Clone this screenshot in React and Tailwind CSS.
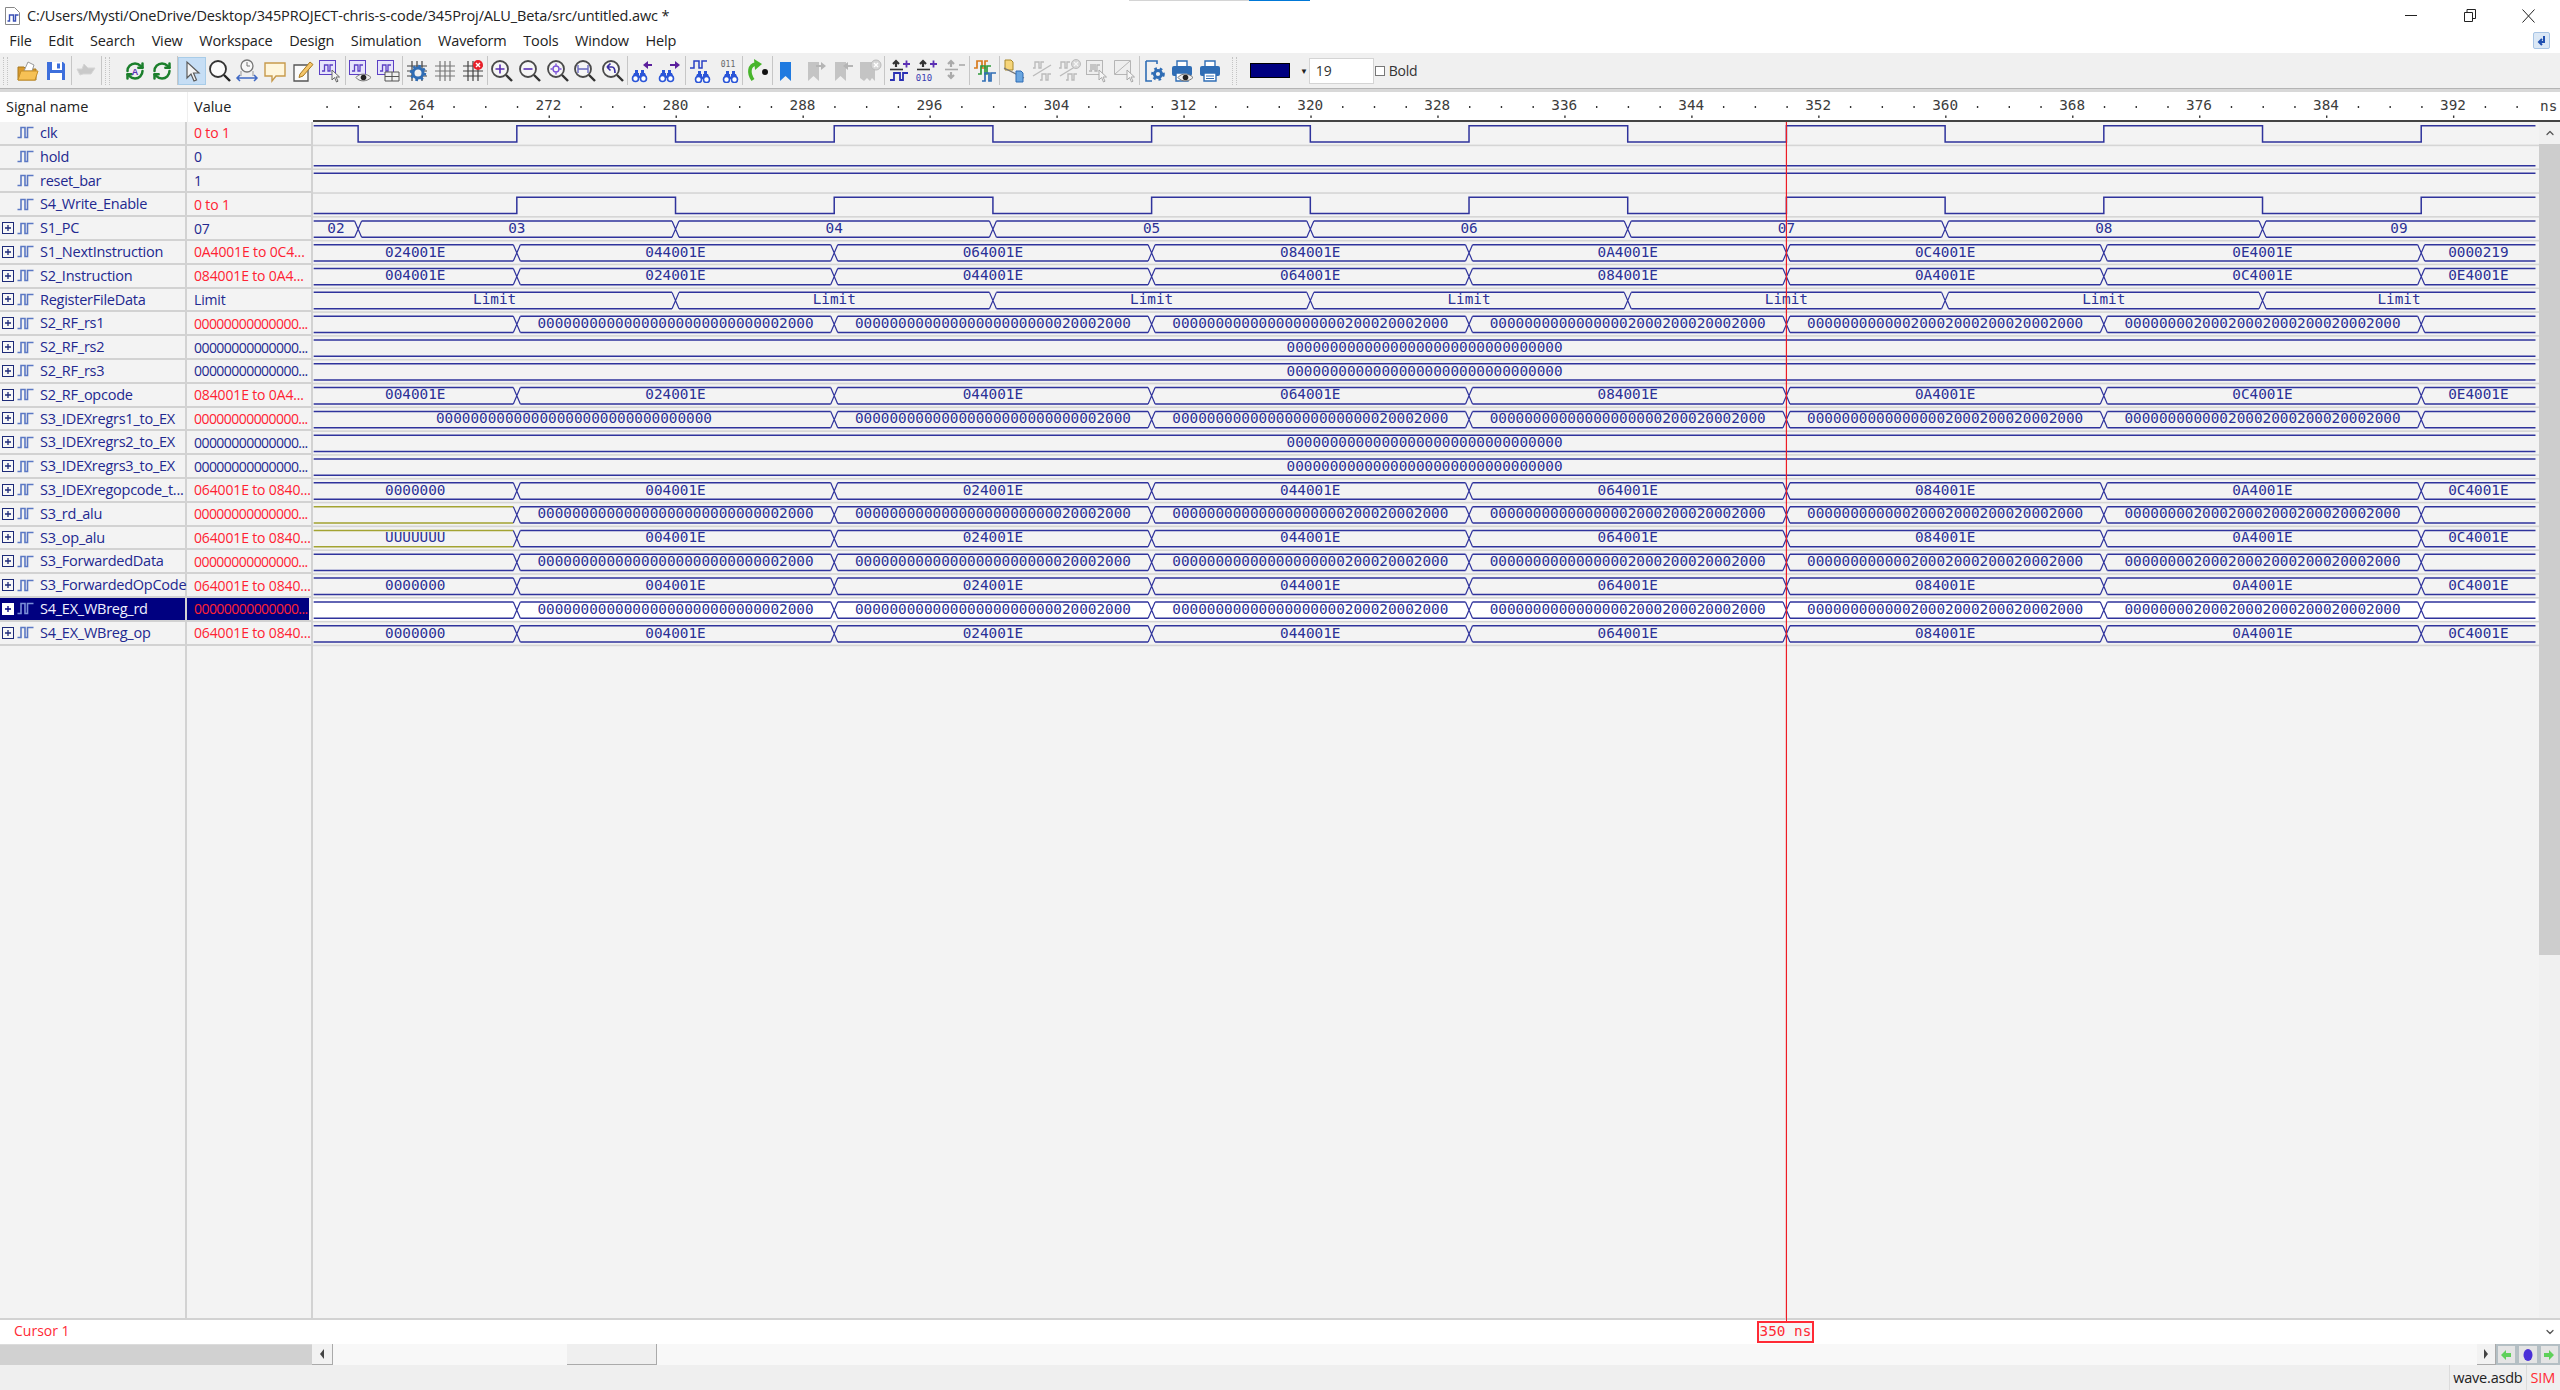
import { RefreshCw, ChevronUp, ChevronDown } from 'lucide-react';

const PX = 15.87;
const X = (t) => 108.6 + (t - 264) * PX;
const T_END = 397.2;
const T_START = 257.2;
const ROW = 23.81;

const steps = (from, to, by) => {
  const out = [];
  for (let t = from; t <= to; t += by) out.push(t);
  return out;
};
const x2000 = (n) => '0'.repeat(32 - 4 * n) + '2000'.repeat(n);
const ZERO = '0'.repeat(32);

const OPS = ['004001E', '024001E', '044001E', '064001E', '084001E', '0A4001E', '0C4001E', '0E4001E'];
const C270 = steps(270, 390, 20);
const DATA = ['', x2000(1), x2000(2), x2000(3), x2000(4), x2000(5), x2000(6), ''];
const OPS3 = ['0000000', ...OPS.slice(0, 7)];
const CLK = steps(260, 390, 10);
const LONG = '00000000000000...';
const OP_VAL = '064001E to 0840...';

const signals = [
  { name: 'clk', value: '0 to 1', red: true, bit: { init: 1, edges: CLK } },
  { name: 'hold', value: '0', bit: { init: 0, edges: [] } },
  { name: 'reset_bar', value: '1', bit: { init: 1, edges: [] } },
  { name: 'S4_Write_Enable', value: '0 to 1', red: true, bit: { init: 0, edges: steps(270, 390, 10) } },
  { name: 'S1_PC', value: '07', open: true, changes: steps(260, 380, 20), labels: ['02', '03', '04', '05', '06', '07', '08', '09'] },
  { name: 'S1_NextInstruction', value: '0A4001E to 0C4...', red: true, open: true, changes: C270, labels: ['024001E', '044001E', '064001E', '084001E', '0A4001E', '0C4001E', '0E4001E', '0000219'] },
  { name: 'S2_Instruction', value: '084001E to 0A4...', red: true, open: true, changes: C270, labels: OPS },
  { name: 'RegisterFileData', value: 'Limit', open: true, changes: steps(280, 380, 20), labels: Array(7).fill('Limit') },
  { name: 'S2_RF_rs1', value: LONG, red: true, open: true, changes: C270, labels: DATA },
  { name: 'S2_RF_rs2', value: LONG, open: true, changes: [], labels: [ZERO] },
  { name: 'S2_RF_rs3', value: LONG, open: true, changes: [], labels: [ZERO] },
  { name: 'S2_RF_opcode', value: '084001E to 0A4...', red: true, open: true, changes: C270, labels: OPS },
  { name: 'S3_IDEXregrs1_to_EX', value: LONG, red: true, open: true, changes: steps(290, 390, 20), labels: [ZERO, x2000(1), x2000(2), x2000(3), x2000(4), x2000(5), ''] },
  { name: 'S3_IDEXregrs2_to_EX', value: LONG, open: true, changes: [], labels: [ZERO] },
  { name: 'S3_IDEXregrs3_to_EX', value: LONG, open: true, changes: [], labels: [ZERO] },
  { name: 'S3_IDEXregopcode_t...', value: OP_VAL, red: true, open: true, changes: C270, labels: OPS3 },
  { name: 'S3_rd_alu', value: LONG, red: true, open: true, changes: C270, labels: DATA, olive: true },
  { name: 'S3_op_alu', value: OP_VAL, red: true, open: true, changes: C270, labels: ['UUUUUUU', ...OPS3.slice(1)], olive: true },
  { name: 'S3_ForwardedData', value: LONG, red: true, open: true, changes: C270, labels: DATA },
  { name: 'S3_ForwardedOpCode', value: OP_VAL, red: true, open: true, changes: C270, labels: OPS3 },
  { name: 'S4_EX_WBreg_rd', value: LONG, red: true, open: true, changes: C270, labels: DATA, selected: true },
  { name: 'S4_EX_WBreg_op', value: OP_VAL, red: true, open: true, changes: C270, labels: OPS3 },
];

const LINE = '#2f339c';
const OLIVE = '#a3a332';

function BitWave({ sig, y }) {
  const hi = y + 3.7;
  const lo = y + 20;
  let level = sig.bit.init;
  let d = `M${X(T_START)} ${level ? hi : lo}`;
  sig.bit.edges.forEach((t) => {
    d += ` H${X(t)} V${level ? lo : hi}`;
    level = level ? 0 : 1;
  });
  d += ` H${X(T_END)}`;
  return <path d={d} fill="none" stroke={LINE} strokeWidth="1.5" />;
}

function BusWave({ sig, y }) {
  const hi = y + 3.7;
  const lo = y + 20;
  const cuts = [T_START, ...sig.changes, T_END];
  return (
    <g>
      {sig.labels.map((label, i) => {
        const a = X(cuts[i]) + (i === 0 ? 0 : 3.5);
        const b = X(cuts[i + 1]) - (i === sig.labels.length - 1 ? 0 : 3.5);
        const color = sig.olive && i === 0 ? OLIVE : LINE;
        return (
          <g key={i}>
            <path d={`M${a} ${hi} H${b} M${a} ${lo} H${b}`} fill="none" stroke={color} strokeWidth="1.5" />
            {label && (
              <text
                x={(X(cuts[i]) + X(cuts[i + 1])) / 2}
                y={y + 15.5}
                textAnchor="middle"
                className="font-['DejaVu_Sans_Mono',monospace] text-[14.33px]"
                fill="#2a3096"
              >
                {label}
              </text>
            )}
          </g>
        );
      })}
      {sig.changes.map((t) => (
        <path
          key={t}
          d={`M${X(t) - 3.5} ${hi} L${X(t) + 3.5} ${lo} M${X(t) - 3.5} ${lo} L${X(t) + 3.5} ${hi}`}
          fill="none"
          stroke={LINE}
          strokeWidth="1.2"
        />
      ))}
    </g>
  );
}

function Waves() {
  return (
    <svg width="2226" height="1196" className="block shrink-0">
      <rect width="2226" height="1196" fill="#f3f3f3" />
      {signals.map((sig, i) => {
        const y = i * ROW;
        return (
          <g key={sig.name}>
            {sig.selected && <rect x="0" y={y + 1} width="2225" height={ROW - 2} fill="#ffffff" />}
            <rect x="0" y={y + 22.6} width="2226" height="1.6" fill="#d5d5d5" />
            {sig.bit ? <BitWave sig={sig} y={y} /> : <BusWave sig={sig} y={y} />}
          </g>
        );
      })}
      <line x1={X(350)} y1="0" x2={X(350)} y2="1196" stroke="#ee1c25" strokeWidth="1.2" />
    </svg>
  );
}

function Ruler() {
  const labels = steps(264, 392, 8);
  const dots = steps(258, 396, 2).filter((t) => (t - 264) % 8 !== 0);
  return (
    <svg width="2247" height="30" className="block shrink-0">
      {dots.map((t) => (
        <rect key={t} x={X(t)} y="14" width="1.4" height="2" fill="#333" />
      ))}
      {labels.map((t) => (
        <g key={t}>
          <text
            x={X(t)}
            y="18"
            textAnchor="middle"
            fill="#3c3c3c"
            className="font-['DejaVu_Sans_Mono',monospace] text-[14.33px]"
          >
            {t}
          </text>
          <rect x={X(t)} y="23.5" width="1.4" height="2.4" fill="#333" />
        </g>
      ))}
      <text x="2227" y="19" fill="#3c3c3c" className="font-['DejaVu_Sans_Mono',monospace] text-[14.33px]">
        ns
      </text>
    </svg>
  );
}

function Pulse({ light }) {
  return (
    <svg width="18" height="13" viewBox="0 0 18 13" className="shrink-0">
      <path d="M0.5 11.5h3.500V1.500h4v10h2.500V1.500h6" fill="none" stroke={light ? '#7b8fd8' : '#5b78c4'} strokeWidth="1.6" />
    </svg>
  );
}

function PlusBox({ light }) {
  return (
    <svg width="12" height="12" viewBox="0 0 12 12" className="shrink-0">
      <rect x="0.5" y="0.5" width="11" height="11" fill={light ? '#fff' : '#f7f7f7'} stroke={light ? '#fff' : '#1d2a78'} />
      <path d="M3 6h6M6 3v6" stroke={light ? '#000080' : '#1d2a78'} strokeWidth="1.3" />
    </svg>
  );
}

function NameCell({ sig }) {
  return (
    <div
      className={`flex h-[23.81px] items-center border-b-2 border-[#d2d2d2] ${
        sig.selected ? 'bg-[#000080] text-[#f0f0ff]' : 'text-[#22288f]'
      }`}
    >
      <div className="ml-[2px] w-[12px] shrink-0">{sig.open && <PlusBox light={sig.selected} />}</div>
      <div className="ml-[3px] mr-[5px] flex shrink-0 items-center">
        <Pulse light={sig.selected} />
      </div>
      <span className="whitespace-nowrap text-[14.500px] tracking-[-0.25px]">{sig.name}</span>
    </div>
  );
}

function ValueCell({ sig }) {
  return (
    <div className="h-[23.81px] border-b-2 border-[#d2d2d2]">
      <div
        className={`flex h-full items-center overflow-hidden whitespace-nowrap pl-[7px] ${
          sig.value === LONG ? 'tracking-[-0.55px]' : 'tracking-[-0.15px]'
        } ${sig.red ? 'text-[#ff2232]' : 'text-[#22288f]'} ${sig.selected ? 'mr-[2px] bg-[#000080]' : ''}`}
      >
        {sig.value}
      </div>
    </div>
  );
}

/* ---------- toolbar icons ---------- */
const S = ({ children }) => (
  <svg width="24" height="24" viewBox="0 0 24 24" fill="none">
    {children}
  </svg>
);
const WaveBox = ({ c = '#5b3fc4', bg = '#e6e4fb', x = 1, y = 1 }) => (
  <g transform={`translate(${x} ${y})`}>
    <rect x="0.5" y="0.5" width="16" height="14" fill={bg} stroke={c} />
    <path d="M3 11h2.5V5H9v6h2V5h3" stroke={c} strokeWidth="1.3" />
  </g>
);
const Cursor = ({ x = 13, y = 11, c = '#666' }) => (
  <path transform={`translate(${x} ${y})`} d="M1 0v10l2.5-2.5 2 4.5 1.5-.8-2-4.2h3.5z" fill="#f5f5f5" stroke={c} />
);
const Eye = ({ x = 8, y = 14 }) => (
  <g transform={`translate(${x} ${y})`}>
    <path d="M0 4.5C3 0 11 0 15 4.5 11 9 3 9 0 4.5z" fill="#eee" stroke="#777" />
    <circle cx="7.5" cy="4.5" r="2.8" fill="#222" />
  </g>
);
const GridLines = ({ c = '#666' }) => (
  <path d="M7 2v20M12 2v20M17 2v20M2 7h20M2 12h20M2 17h20" stroke={c} strokeWidth="1.2" />
);
const Gear = ({ cx, cy, r = 5, c = '#2f6db5' }) => (
  <g>
    <circle cx={cx} cy={cy} r={r} stroke={c} strokeWidth="3" fill="#f0f0f0" />
    <circle cx={cx} cy={cy} r={r + 2} stroke={c} strokeWidth="2.4" strokeDasharray="2.6 2.9" />
  </g>
);
const Lens = ({ children }) => (
  <>
    <circle cx="10" cy="10" r="8" fill="#f6f6f6" stroke="#4a4a4a" strokeWidth="1.8" />
    <path d="M16 16l6 6" stroke="#333" strokeWidth="2.4" />
    {children}
  </>
);
const Binoc = ({ x = 0, y = 12 }) => (
  <g transform={`translate(${x} ${y})`}>
    <path d="M4 0h3v4H4zM10 0h3v4h-3z" fill="#2a55d8" />
    <path d="M3 3h5v2.5h1V3h5l2 5H1z" fill="#2a55d8" />
    <circle cx="4.5" cy="8.5" r="3" fill="#fff" stroke="#2a55d8" strokeWidth="1.6" />
    <circle cx="12.5" cy="8.5" r="3" fill="#fff" stroke="#2a55d8" strokeWidth="1.6" />
  </g>
);
const Bookmark = ({ c = '#c4c4c4' }) => <path d="M5 3h11v19l-5.5-5L5 22z" fill={c} />;
const Printer = ({ eye }) => (
  <>
    <path d="M7 2h10v6H7z" fill="#fff" stroke="#2f6db5" strokeWidth="1.4" />
    <rect x="2" y="7" width="20" height="10" rx="2" fill="#2f6db5" />
    <path d="M6 14h12v8H6z" fill="#fff" stroke="#2f6db5" strokeWidth="1.4" />
    {eye ? <Eye x="8" y="14" /> : <path d="M8 17h8M8 19.5h8" stroke="#2f6db5" />}
  </>
);
const AddLines = ({ c, plus = '#5b2fb4', minus }) => (
  <>
    <path d="M8 8V3M5 5l3-3 3 3" stroke={c} strokeWidth="2.2" />
    <path d="M2 10.5h13" stroke={c} strokeWidth="1.6" />
    {minus ? (
      <path d="M16 6h6" stroke={plus} strokeWidth="1.6" />
    ) : (
      <path d="M15 5h7M18.5 1.5v7" stroke={plus} strokeWidth="1.8" />
    )}
  </>
);

const icons = {
  folder: (
    <S>
      <path d="M2 8h6l2 2h10v11H2z" fill="#d9992d" stroke="#a87a20" />
      <path d="M8 12L12 3l6 3-2 6z" fill="#fff" stroke="#999" />
      <path d="M2 21l3-9h17l-3 9z" fill="#f6c155" stroke="#c58f29" />
    </S>
  ),
  save: (
    <S>
      <path d="M3 3h16l2 2v16H3z" fill="#3d6fdc" />
      <rect x="8" y="3" width="10" height="8" fill="#fff" />
      <rect x="13" y="4.5" width="3" height="5" fill="#3d6fdc" />
      <rect x="6" y="14" width="12" height="7" fill="#fff" />
    </S>
  ),
  share: (
    <S>
      <path d="M3 10h5l2-5 4 4h7l-4 6H9l-3 1z" fill="#c9c9c9" stroke="#d5d5d5" />
    </S>
  ),
  syncA: (
    <S>
      <RefreshCw x="2" y="2" width="20" height="20" color="#1b7f2c" strokeWidth="3" />
      <text x="12" y="15.5" textAnchor="middle" fill="#5b2fb4" className="font-['Liberation_Sans',sans-serif] text-[9px] font-bold">
        A
      </text>
    </S>
  ),
  sync: (
    <S>
      <RefreshCw x="2" y="2" width="20" height="20" color="#1b7f2c" strokeWidth="3" />
    </S>
  ),
  arrow: (
    <S>
      <path d="M7 3v16l4-4 3 7 2.5-1-3-7H19z" fill="#f4f4f4" stroke="#5a5a5a" strokeWidth="1.2" />
    </S>
  ),
  search: (
    <S>
      <circle cx="10" cy="10" r="8" stroke="#333" strokeWidth="1.8" fill="#fbfbfb" />
      <path d="M16 16l6 6" stroke="#222" strokeWidth="2.4" />
    </S>
  ),
  clock: (
    <S>
      <circle cx="12" cy="7" r="6" stroke="#777" strokeWidth="1.3" fill="#f8f8f8" />
      <path d="M12 3v4h3" stroke="#777" />
      <path d="M6 12v5M18 12v5" stroke="#999" />
      <path d="M2 19h20M5 16l-3 3 3 3M19 16l3 3-3 3" stroke="#4069c4" strokeWidth="1.5" />
    </S>
  ),
  comment: (
    <S>
      <path d="M2 4h20v13h-9l-4 5v-5H2z" fill="#fff6dc" stroke="#c79a4b" strokeWidth="1.4" />
    </S>
  ),
  edit: (
    <S>
      <path d="M3 6h14v16H3z" fill="#fbfbfb" stroke="#555" strokeWidth="1.3" />
      <path d="M9 15L19 3l3 2.5L12 17l-4 1.5z" fill="#f5c66a" stroke="#a87a20" />
    </S>
  ),
  waveCursor: (
    <S>
      <WaveBox />
      <Cursor />
    </S>
  ),
  waveEye: (
    <S>
      <WaveBox />
      <Eye />
    </S>
  ),
  waveTable: (
    <S>
      <WaveBox />
      <path d="M9 13h14v9H9zM9 17.5h14M16 13v9" fill="#f0f0f0" stroke="#555" />
    </S>
  ),
  gearGrid: (
    <S>
      <GridLines c="#444" />
      <Gear cx={13} cy={14} r={5} />
    </S>
  ),
  grid: (
    <S>
      <GridLines c="#777" />
    </S>
  ),
  gridX: (
    <S>
      <GridLines c="#444" />
      <circle cx="17" cy="6" r="5" fill="#e8202a" />
      <path d="M15 4l4 4M19 4l-4 4" stroke="#fff" strokeWidth="1.4" />
    </S>
  ),
  zoomIn: (
    <S>
      <Lens>
        <path d="M5.5 10h9M10 5.5v9" stroke="#5b2fb4" strokeWidth="1.6" />
      </Lens>
    </S>
  ),
  zoomOut: (
    <S>
      <Lens>
        <path d="M5.5 10h9" stroke="#5b2fb4" strokeWidth="1.6" />
      </Lens>
    </S>
  ),
  zoomFit: (
    <S>
      <Lens>
        <circle cx="10" cy="10" r="3" stroke="#7a50d8" strokeWidth="1.4" />
        <path d="M10 4.5v2M10 13.5v2M4.5 10h2M13.5 10h2" stroke="#7a50d8" strokeWidth="1.4" />
      </Lens>
    </S>
  ),
  zoomWidth: (
    <S>
      <Lens>
        <path d="M5 6v8M15 6v8M5 10h10" stroke="#6a6ac0" strokeWidth="1.4" />
      </Lens>
    </S>
  ),
  zoomBack: (
    <S>
      <Lens>
        <path d="M6 8l3.5-3.5M6 8l3.5 3.5M6 8h5c3 0 3 3 3 6" stroke="#3b2fa4" strokeWidth="1.7" />
      </Lens>
    </S>
  ),
  findLeft: (
    <S>
      <Binoc y={11} />
      <path d="M12 6h4V3l5 4-5 4V8h-4z" transform="matrix(-1 0 0 1 33 -1)" fill="#5b1f9c" />
    </S>
  ),
  findRight: (
    <S>
      <Binoc y={11} />
      <path d="M12 5h5V2l5 4-5 4V7h-5z" fill="#5b1f9c" />
    </S>
  ),
  findWave: (
    <S>
      <path d="M2 9h4V2h5v7h3V2h5" stroke="#2a40c4" strokeWidth="1.5" />
      <Binoc x={6} y={12} />
    </S>
  ),
  find011: (
    <S>
      <text x="12" y="8" textAnchor="middle" fill="#666" className="font-['DejaVu_Sans_Mono',monospace] text-[8px]">
        011
      </text>
      <Binoc x={6} y={12} />
    </S>
  ),
  goto: (
    <S>
      <path d="M8 21C3 14 4 6 11 5" stroke="#48b52c" strokeWidth="3.6" />
      <path d="M9 0l8 5-7 6z" fill="#48b52c" />
      <circle cx="20" cy="13" r="3" fill="#111" />
    </S>
  ),
  bookmark: (
    <S>
      <Bookmark c="#1f7ae0" />
    </S>
  ),
  bmRight: (
    <S>
      <Bookmark />
      <path d="M13 6h5V3l5 4-5 4V8h-5z" fill="#b5b5b5" />
    </S>
  ),
  bmLeft: (
    <S>
      <Bookmark />
      <path d="M23 6h-5V3l-5 4 5 4V8h5z" fill="#b5b5b5" />
    </S>
  ),
  bmX: (
    <S>
      <path d="M2 3h15v19l-3-3-2 3-3-3-3 3-4-3z" fill="#c4c4c4" />
      <circle cx="18" cy="6" r="5" fill="#d6d6d6" stroke="#bbb" />
      <path d="M16 4l4 4M20 4l-4 4" stroke="#fff" strokeWidth="1.4" />
    </S>
  ),
  addWave: (
    <S>
      <AddLines c="#333" />
      <path d="M2 21h4v-7h6v7h3v-7h5" stroke="#2a30b4" strokeWidth="1.8" />
    </S>
  ),
  add010: (
    <S>
      <AddLines c="#333" />
      <text x="9" y="22" textAnchor="middle" fill="#3a40b4" className="font-['DejaVu_Sans_Mono',monospace] text-[9px]">
        010
      </text>
    </S>
  ),
  remove: (
    <S>
      <AddLines c="#aaa" plus="#aaa" minus />
      <path d="M8 13v5M5 16l3 3 3-3" stroke="#aaa" strokeWidth="2.2" />
    </S>
  ),
  waveColor: (
    <S>
      <path d="M1 9h3V2h5v7h3V2h3" stroke="#d87a1c" strokeWidth="1.7" />
      <path d="M5 15h3V7h4v8h2V7h4" stroke="#2f9a3a" strokeWidth="1.7" />
      <path d="M9 22h3v-8h4v8h2v-8h5" stroke="#2f6db5" strokeWidth="1.7" />
    </S>
  ),
  tagEdit: (
    <S>
      <path d="M3 1h6l2 2v8H3z" fill="#f6d57a" stroke="#a8882a" />
      <path d="M2 9l20 10" stroke="#777" strokeWidth="1.2" />
      <path d="M14 12h5l2 2v9h-7z" fill="#6aa6e0" stroke="#2f6db5" />
    </S>
  ),
  slash: (
    <S>
      <path d="M3 9h2V3h4v6h2V3h3M10 21h2v-6h4v6h2v-6h3" stroke="#bbb" strokeWidth="1.4" />
      <path d="M3 17L21 6" stroke="#bbb" strokeWidth="1.4" />
    </S>
  ),
  slashX: (
    <S>
      <path d="M1 9h2V3h4v6h2V3h3M8 21h2v-6h4v6h2v-6h3" stroke="#bbb" strokeWidth="1.4" />
      <path d="M2 17L20 6" stroke="#bbb" strokeWidth="1.4" />
      <circle cx="18" cy="5" r="4.5" fill="#d6d6d6" stroke="#bbb" />
      <path d="M16 3l4 4M20 3l-4 4" stroke="#f6f6f6" strokeWidth="1.2" />
    </S>
  ),
  grayCursor: (
    <S>
      <WaveBox c="#b5b5b5" bg="#eeeeee" />
      <path d="M5 5h6v6H5z" fill="#c5c5c5" />
      <Cursor c="#aaa" />
    </S>
  ),
  grayCursor2: (
    <S>
      <path d="M1.5 1.5h16v14h-16zM2 15L17 2" fill="#eeeeee" stroke="#b5b5b5" />
      <Cursor c="#aaa" />
    </S>
  ),
  docGear: (
    <S>
      <path d="M3 2h11v3M3 2v20h6" stroke="#2f6db5" strokeWidth="1.6" />
      <Gear cx={15} cy={15} r={3.6} />
    </S>
  ),
  printEye: (
    <S>
      <Printer eye />
    </S>
  ),
  print: (
    <S>
      <Printer />
    </S>
  ),
};

const groups = [
  ['folder', 'save'],
  ['share'],
  ['syncA', 'sync'],
  ['arrow', 'search', 'clock', 'comment', 'edit', 'waveCursor'],
  ['waveEye', 'waveTable'],
  ['gearGrid', 'grid', 'gridX'],
  ['zoomIn', 'zoomOut', 'zoomFit', 'zoomWidth', 'zoomBack'],
  ['findLeft', 'findRight'],
  ['findWave', 'find011'],
  ['goto'],
  ['bookmark', 'bmRight', 'bmLeft', 'bmX'],
  ['addWave', 'add010', 'remove'],
  ['waveColor'],
  ['tagEdit', 'slash', 'slashX', 'grayCursor', 'grayCursor2'],
  ['docGear', 'printEye', 'print'],
];

const Grip = () => <div className="h-[28px] w-[5px] border-x border-dotted border-[#c4c4c4]" />;
const Sep = () => (
  <div className="flex w-[2px] justify-center">
    <div className="h-[29px] w-px bg-[#c6c6c6]" />
  </div>
);

function Toolbar() {
  return (
    <div className="flex h-[35px] shrink-0 items-center bg-[#f0f0f0] pl-[3px]">
      <Grip />
      <div className="w-[6.66px]" />
      {groups.map((group, g) => (
        <div key={g} className="flex items-center">
          {group.map((name) => (
            <div
              key={name}
              className={`flex h-[28px] w-[27.68px] items-center justify-center ${
                name === 'arrow' ? 'border border-[#a8cce8] bg-[#c6def5]' : ''
              }`}
            >
              {icons[name]}
            </div>
          ))}
          {g === 1 ? (
            <div className="flex w-[21px] items-center gap-[3px] pl-[1px]">
              <div className="h-[29px] w-px bg-[#c6c6c6]" />
              <Grip />
            </div>
          ) : g < groups.length - 1 ? (
            <Sep />
          ) : null}
        </div>
      ))}
      <div className="ml-[8px]">
        <Grip />
      </div>
      <div className="ml-[13px] h-[15px] w-[40px] border border-black bg-[#000080]" />
      <span className="ml-[10px] mr-[1px] text-[8px] leading-none text-[#222]">▼</span>
      <div className="flex h-[26px] w-[65px] items-center border border-[#d4d4d4] bg-white pl-[6px] text-[14px] text-[#333]">
        19
      </div>
      <div className="ml-[1px] h-[10px] w-[10px] border border-[#777] bg-white" />
      <span className="ml-[4px] text-[14px] tracking-[-0.3px] text-[#333]">Bold</span>
    </div>
  );
}

const menus = ['File', 'Edit', 'Search', 'View', 'Workspace', 'Design', 'Simulation', 'Waveform', 'Tools', 'Window', 'Help'];

function ScrollArrow({ dir }) {
  return (
    <div className={`h-0 w-0 border-y-[5px] border-y-transparent ${dir === 'l' ? 'border-r-[4px] border-r-[#444]' : 'border-l-[4px] border-l-[#444]'}`} />
  );
}

function NavBtn({ children }) {
  return (
    <div className="flex h-[21px] w-[21.5px] items-center justify-center border-2 border-[#b4bfc4] bg-[#e4e4e4]">
      {children}
    </div>
  );
}

export default function App() {
  return (
    <div className="relative flex h-[1390px] w-[2560px] flex-col overflow-hidden bg-white font-['Open_Sans',sans-serif] text-[14px] text-[#222]">
      <div className="absolute left-[1129px] top-0 h-px w-[120px] bg-[#d4d4d4]" />
      <div className="absolute left-[1249px] top-0 h-px w-[61px] bg-[#0078d7]" />

      {/* title bar */}
      <div className="flex h-[28px] shrink-0 items-center pt-[3px]">
        <svg width="18" height="20" viewBox="0 0 18 20" className="ml-[4px]">
          <path d="M1.5 1.5h9l5 5v12h-14z" fill="#fff" stroke="#888" />
          <path d="M3.5 15h2V9h4v6h2V9h3" fill="none" stroke="#3a4fb4" strokeWidth="1.4" />
        </svg>
        <span className="ml-[5px] whitespace-nowrap text-[14.5px] tracking-[-0.13px]">
          C:/Users/Mysti/OneDrive/Desktop/345PROJECT-chris-s-code/345Proj/ALU_Beta/src/untitled.awc *
        </span>
        <div className="ml-auto flex items-center">
          <div className="h-px w-[12px] bg-[#222]" />
          <svg width="12" height="13" viewBox="0 0 12 13" className="ml-[47px]">
            <path d="M0.5 3.5h8v9h-8zM3 3.5V.5h8.500v9H8.500" fill="none" stroke="#222" />
          </svg>
          <svg width="13" height="14" viewBox="0 0 13 14" className="ml-[46px] mr-[25px]">
            <path d="M.5.5l12 13M12.500.5l-12 13" stroke="#222" />
          </svg>
        </div>
      </div>

      {/* menu */}
      <div className="flex h-[25px] shrink-0 items-center pl-[1px] text-[14.5px]">
        {menus.map((m) => (
          <span key={m} className="px-[8.3px] tracking-[-0.15px]">
            {m}
          </span>
        ))}
        <div className="ml-auto mr-[10px] flex h-[17px] w-[17px] items-center justify-center rounded-[2px] border border-[#a8c4e4] bg-[#dbe8f6]">
          <svg width="10" height="12" viewBox="0 0 10 12">
            <path d="M7 1v6H3M5 4L2 7l3 3" fill="none" stroke="#1f4fb0" strokeWidth="2" />
          </svg>
        </div>
      </div>

      <Toolbar />
      <div className="h-[1px] shrink-0 bg-[#b4b4b4]" />
      <div className="h-[3px] shrink-0 bg-[#d8d8d8]" />

      {/* header */}
      <div className="flex h-[30px] shrink-0">
        <div className="flex w-[187px] items-center pl-[6px] text-[14.5px]">Signal name</div>
        <div className="flex w-[126px] items-center border-l border-[#efefef] pl-[6px] text-[14.5px]">Value</div>
        <div className="relative">
          <Ruler />
          <div className="absolute inset-x-0 bottom-0 h-[2px] bg-[#444]" />
        </div>
      </div>

      {/* signals + waves */}
      <div className="flex h-[1196px] shrink-0 bg-[#f3f3f3]">
        <div className="w-[187px] shrink-0 border-r-2 border-[#d2d2d2]">
          {signals.map((sig) => (
            <NameCell key={sig.name} sig={sig} />
          ))}
        </div>
        <div className="w-[126px] shrink-0 border-r-2 border-[#d2d2d2]">
          {signals.map((sig) => (
            <ValueCell key={sig.name} sig={sig} />
          ))}
        </div>
        <Waves />
        <div className="flex w-[21px] shrink-0 flex-col bg-[#f0f0f0]">
          <div className="flex h-[22px] items-center justify-center">
            <ChevronUp size={12} color="#555" strokeWidth={2.5} />
          </div>
          <div className="h-[811px] bg-[#cdcdcd]" />
        </div>
      </div>

      {/* cursor row */}
      <div className="relative flex h-[26px] shrink-0 items-center border-t-2 border-[#d2d2d2] bg-white">
        <span className="mb-[3px] ml-[14px] text-[#ff2a35]">Cursor 1</span>
        <div className="absolute left-[1786px] top-[-2px] h-[3px] w-px bg-[#ee1c25]" />
        <div className="absolute left-[1757px] top-[1px] flex h-[22px] w-[57px] items-center justify-center border-2 border-[#ff2a35] bg-[#f6f6f6] font-['DejaVu_Sans_Mono',monospace] text-[14.33px] text-[#ff2a35]">
          350 ns
        </div>
        <div className="absolute right-[4px] top-[6px]">
          <ChevronDown size={12} color="#555" strokeWidth={2.5} />
        </div>
      </div>

      {/* horizontal scroll */}
      <div className="flex h-[21px] shrink-0 bg-[#f8f8f8]">
        <div className="w-[312px] border-t border-[#dcdcdc] bg-[#d1d1d1]" />
        <div className="flex w-[21px] items-center justify-center border-b border-r border-[#aaa] bg-[#f2f2f2]">
          <ScrollArrow dir="l" />
        </div>
        <div className="ml-[234px] w-[90px] border-b border-r border-[#aaa] bg-[#efefef]" />
        <div className="ml-auto flex w-[19px] items-center justify-center border-b border-r border-[#aaa] bg-[#f2f2f2]">
          <ScrollArrow dir="r" />
        </div>
        <NavBtn>
          <svg width="12" height="12" viewBox="0 0 12 12">
            <path d="M1 6l5-5v3h5v4H6v3z" fill="#5fd05a" />
          </svg>
        </NavBtn>
        <NavBtn>
          <svg width="10" height="14" viewBox="0 0 10 14">
            <ellipse cx="5" cy="7" rx="4.500" ry="6" fill="#4a2fd8" />
          </svg>
        </NavBtn>
        <NavBtn>
          <svg width="12" height="12" viewBox="0 0 12 12">
            <path d="M11 6L6 1v3H1v4h5v3z" fill="#5fd05a" />
          </svg>
        </NavBtn>
      </div>

      {/* status bar */}
      <div className="flex h-[25px] shrink-0 items-center justify-end bg-[#efefef] pr-[1px] text-[14.5px]">
        <span className="flex h-full items-center border-l border-[#dcdcdc] pl-[3px] pr-[3px] tracking-[-0.2px] text-[#222]">wave.asdb</span>
        <span className="flex h-full items-center border-l border-[#dcdcdc] pl-[4px] pr-[4px] tracking-[-0.2px] text-[#ff2a35]">SIM</span>
      </div>
    </div>
  );
}
